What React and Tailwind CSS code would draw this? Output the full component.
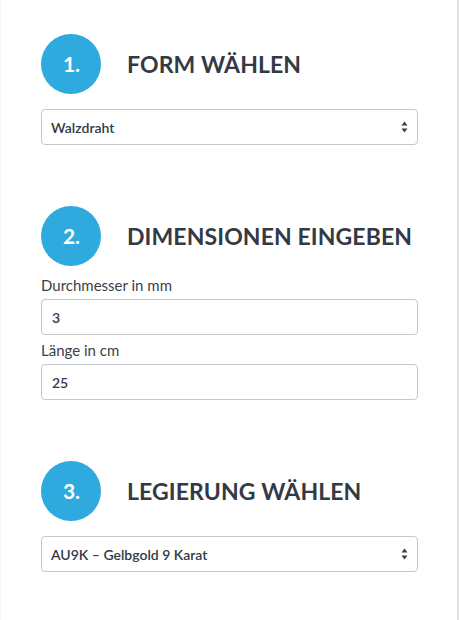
const Arrows = () => (
  <svg className="absolute right-[9px] top-1/2 -translate-y-1/2" width="7" height="12" viewBox="0 0 7 12">
    <path d="M3.5 0.5 L6.5 4.5 L0.5 4.5 Z" fill="#3a3f47" />
    <path d="M3.5 11.5 L6.5 7.5 L0.5 7.5 Z" fill="#3a3f47" />
  </svg>
);

const Step = ({ num, title }) => (
  <div className="flex items-center">
    <div className="w-[60px] h-[60px] rounded-full bg-[#2eaadf] flex items-center justify-center text-white font-bold text-[21px] pl-[1px]">
      {num}
    </div>
    <h2 className="ml-[26px] font-bold text-[23px] text-[#333a45] tracking-[0.1px] leading-none">{title}</h2>
  </div>
);

const SelectBox = ({ value }) => (
  <div className="relative mt-[15px] h-[36px] rounded-[4px] border border-[#c3c7cf] flex items-center pl-[9px] text-[14px] font-semibold text-[#333a45] bg-white">
    {value}
    <Arrows />
  </div>
);

const Field = ({ label, value }) => (
  <div>
    <div className="text-[15px] leading-[20px] text-[#3a3f47] mt-[5px]">{label}</div>
    <div className="mt-[4px] h-[36px] rounded-[4px] border border-[#c3c7cf] flex items-center pl-[10px] text-[14px] font-semibold text-[#333a45]">
      {value}
    </div>
  </div>
);

export default function App() {
  return (
    <div className="w-[460px] h-[620px] bg-white" style={{ fontFamily: 'Lato, "Open Sans", Arial, sans-serif' }}>
      <div className="w-[459px] h-full border-l border-l-[#f4f4f4] border-r-2 border-r-[#e2e2e2] pt-[34px] pl-[40px] pr-[39px]">
        <section>
          <Step num="1." title="FORM WÄHLEN" />
          <SelectBox value="Walzdraht" />
        </section>
        <section className="mt-[61px]">
          <Step num="2." title="DIMENSIONEN EINGEBEN" />
          <div className="mt-[9px]">
            <Field label="Durchmesser in mm" value="3" />
            <Field label="Länge in cm" value="25" />
          </div>
        </section>
        <section className="mt-[61px]">
          <Step num="3." title="LEGIERUNG WÄHLEN" />
          <SelectBox value="AU9K – Gelbgold 9 Karat" />
        </section>
      </div>
    </div>
  );
}
